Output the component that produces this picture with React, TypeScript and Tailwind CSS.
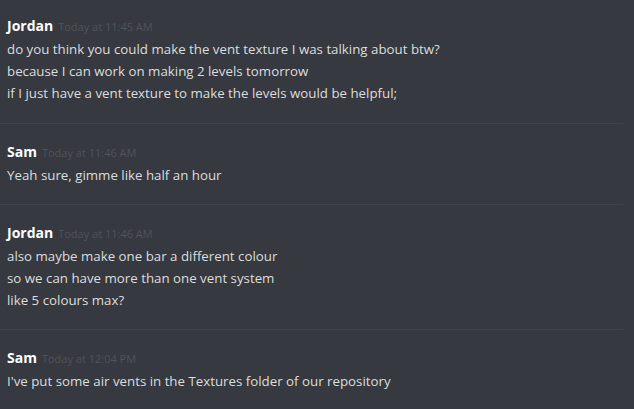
const messages = [
  {
    author: 'Jordan',
    time: 'Today at 11:45 AM',
    lines: [
      'do you think you could make the vent texture I was talking about btw?',
      'because I can work on making 2 levels tomorrow',
      'if I just have a vent texture to make the levels would be helpful;',
    ],
  },
  { author: 'Sam', time: 'Today at 11:46 AM', lines: ['Yeah sure, gimme like half an hour'] },
  {
    author: 'Jordan',
    time: 'Today at 11:46 AM',
    lines: [
      'also maybe make one bar a different colour',
      'so we can have more than one vent system',
      'like 5 colours max?',
    ],
  },
  {
    author: 'Sam',
    time: 'Today at 12:04 PM',
    lines: ["I've put some air vents in the Textures folder of our repository"],
  },
];

export default function App() {
  return (
    <div
      className="w-[634px] h-[409px] overflow-hidden bg-[#36393f]"
      style={{ fontFamily: '"Open Sans", "Noto Sans", sans-serif' }}
    >
      {messages.map((m, i) => (
        <div key={i} className={i === 0 ? '' : 'border-t border-[#40434a] mr-[11px]'}>
          <div className={`pl-[7px] ${i === 0 ? 'pt-[16px] pb-[19px]' : 'pt-[18px] pb-[18px]'}`}>
            <div className="flex items-baseline gap-[5px] h-[20px] leading-[20px]">
              <span className="text-[14px] font-bold text-white">{m.author}</span>
              <span className="text-[11px] text-[#50535a]">{m.time}</span>
            </div>
            <div className="mt-[2px]">
              {m.lines.map((l, j) => (
                <div key={j} className="text-[13.3px] leading-[22px] text-[#dcddde]">
                  {l}
                </div>
              ))}
            </div>
          </div>
        </div>
      ))}
    </div>
  );
}
